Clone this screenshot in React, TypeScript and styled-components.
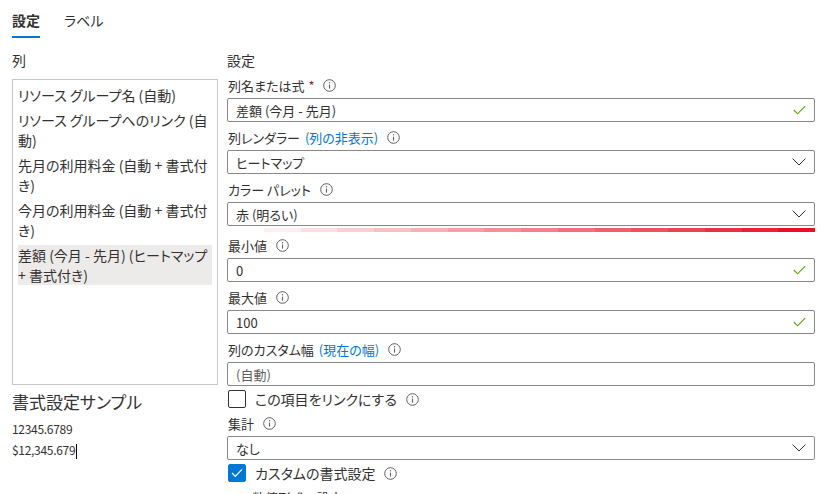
import React from 'react';
import styled, { createGlobalStyle } from 'styled-components';

// Types
interface ColumnItem {
  label: string;
  selected?: boolean;
}

type FieldKind = 'input' | 'select';

interface FieldDef {
  label: string;
  required?: boolean;
  link?: string;
  value: string;
  kind: FieldKind;
  valid?: boolean;
  placeholder?: boolean;
  palette?: boolean;
}

// Data
const columns: ColumnItem[] = [
  { label: 'リソース グループ名 (自動)' },
  { label: 'リソース グループへのリンク (自動)' },
  { label: '先月の利用料金 (自動 + 書式付き)' },
  { label: '今月の利用料金 (自動 + 書式付き)' },
  { label: '差額 (今月 - 先月) (ヒートマップ + 書式付き)', selected: true },
];

const fields: FieldDef[] = [
  { label: '列名または式', required: true, value: '差額 (今月 - 先月)', kind: 'input', valid: true },
  { label: '列レンダラー', link: '(列の非表示)', value: 'ヒートマップ', kind: 'select' },
  { label: 'カラー パレット', value: '赤 (明るい)', kind: 'select', palette: true },
  { label: '最小値', value: '0', kind: 'input', valid: true },
  { label: '最大値', value: '100', kind: 'input', valid: true },
  { label: '列のカスタム幅', link: '(現在の幅)', value: '(自動)', kind: 'input', placeholder: true },
];

const PALETTE_STEPS = 16;

// Styled Components
const GlobalStyle = createGlobalStyle`
  html, body {
    margin: 0;
    padding: 0;
    background: #ffffff;
  }
  body {
    font-family: "Noto Sans CJK JP", "Noto Sans", sans-serif;
    font-feature-settings: "palt";
    color: #323130;
    overflow: hidden;
  }
`;

const Page = styled.div`
  width: 830px;
  height: 494px;
  overflow: hidden;
  padding: 0 15px 0 12px;
  box-sizing: border-box;
`;

const TabBar = styled.div`
  display: flex;
  gap: 24px;
  height: 38px;
`;

const Tab = styled.div<{ active?: boolean }>`
  box-sizing: border-box;
  height: 38px;
  padding-top: 10px;
  font-size: 14px;
  line-height: 20px;
  font-weight: ${({ active }) => (active ? 700 : 400)};
  border-bottom: 2px solid ${({ active }) => (active ? '#0078d4' : 'transparent')};
`;

const Body = styled.div`
  display: flex;
  gap: 9px;
  margin-top: 10px;
`;

const LeftColumn = styled.div`
  width: 206px;
  flex-shrink: 0;
`;

const RightColumn = styled.div`
  flex: 1;
  min-width: 0;
`;

const SectionTitle = styled.div`
  font-size: 14px;
  line-height: 24px;
`;

const ListBox = styled.div`
  box-sizing: border-box;
  height: 306px;
  margin-top: 7px;
  padding: 5px;
  border: 1px solid #c8c6c4;
`;

const ListItem = styled.div<{ selected?: boolean }>`
  font-size: 14px;
  line-height: 20px;
  margin-bottom: 5px;
  background: ${({ selected }) => (selected ? '#edebe9' : 'transparent')};
`;

const SampleTitle = styled.div`
  font-size: 17px;
  line-height: 26px;
  margin-top: 4px;
`;

const SampleList = styled.div`
  margin-top: 3px;
`;

const SampleValue = styled.div`
  font-size: 12px;
  letter-spacing: -0.3px;
  line-height: 21px;
`;

const Caret = styled.span`
  display: inline-block;
  width: 1px;
  height: 15px;
  background: #000000;
  vertical-align: middle;
  margin-left: 1px;
`;

const Field = styled.div<{ tight?: boolean }>`
  margin-bottom: ${({ tight }) => (tight ? '0' : '2px')};
`;

const LabelRow = styled.div<{ indent?: boolean }>`
  display: flex;
  align-items: center;
  height: 26px;
  font-size: 13px;
  padding-left: ${({ indent }) => (indent ? '25px' : '1px')};
`;

const Required = styled.span`
  color: #a4262c;
  margin-left: 4px;
`;

const LinkText = styled.span`
  color: #0078d4;
  margin-left: 5px;
`;

const InfoWrap = styled.span`
  display: inline-flex;
  margin-left: 9px;
`;

const Control = styled.div<{ muted?: boolean }>`
  box-sizing: border-box;
  height: 24px;
  display: flex;
  align-items: center;
  justify-content: space-between;
  padding: 0 8px;
  border: 1px solid #8a8886;
  border-radius: 2px;
  font-size: 13px;
  color: ${({ muted }) => (muted ? '#605e5c' : '#323130')};
`;

const PaletteBar = styled.div`
  display: flex;
  height: 4px;
  margin-top: 2px;
`;

const PaletteCell = styled.div`
  flex: 1;
`;

const CheckRow = styled.div`
  display: flex;
  align-items: center;
  height: 22px;
  padding-left: 1px;
  font-size: 14px;
`;

const CheckBox = styled.span<{ checked?: boolean }>`
  box-sizing: border-box;
  width: 18px;
  height: 18px;
  border-radius: 2px;
  display: inline-flex;
  align-items: center;
  justify-content: center;
  margin-right: 9px;
  border: 1px solid ${({ checked }) => (checked ? '#0078d4' : '#323130')};
  background: ${({ checked }) => (checked ? '#0078d4' : '#ffffff')};
`;

// Icons
const InfoIcon: React.FC = () => (
  <InfoWrap>
    <svg width="13" height="13" viewBox="0 0 13 13">
      <circle cx="6.5" cy="6.5" r="5.8" fill="none" stroke="#605e5c" strokeWidth="1" />
      <line x1="6.5" y1="5.6" x2="6.5" y2="9.6" stroke="#605e5c" strokeWidth="1.1" />
      <circle cx="6.5" cy="3.8" r="0.7" fill="#605e5c" />
    </svg>
  </InfoWrap>
);

const ValidIcon: React.FC = () => (
  <svg width="13" height="10" viewBox="0 0 13 10">
    <path d="M0.8 5 L4.6 8.8 L12.2 1.2" fill="none" stroke="#57a300" strokeWidth="1.1" />
  </svg>
);

const ChevronIcon: React.FC = () => (
  <svg width="14" height="8" viewBox="0 0 14 8">
    <path d="M0.6 0.6 L7 7 L13.4 0.6" fill="none" stroke="#323130" strokeWidth="1" />
  </svg>
);

const TickIcon: React.FC = () => (
  <svg width="12" height="10" viewBox="0 0 12 10">
    <path d="M1 5 L4.3 8.3 L11 1.4" fill="none" stroke="#ffffff" strokeWidth="1.2" />
  </svg>
);

const FieldBlock: React.FC<{ field: FieldDef }> = ({ field }) => (
  <Field tight={field.palette}>
    <LabelRow>
      {field.label}
      {field.required && <Required>*</Required>}
      {field.link && <LinkText>{field.link}</LinkText>}
      <InfoIcon />
    </LabelRow>
    <Control muted={field.placeholder}>
      <span>{field.value}</span>
      {field.kind === 'select' ? <ChevronIcon /> : field.valid ? <ValidIcon /> : null}
    </Control>
    {field.palette && (
      <PaletteBar>
        {Array.from({ length: PALETTE_STEPS }).map((_, i) => (
          <PaletteCell
            key={i}
            style={{ background: `rgba(232, 17, 35, ${i / (PALETTE_STEPS - 1)})` }}
          />
        ))}
      </PaletteBar>
    )}
  </Field>
);

const App: React.FC = () => (
  <>
    <GlobalStyle />
    <Page>
      <TabBar>
        <Tab active>設定</Tab>
        <Tab>ラベル</Tab>
      </TabBar>
      <Body>
        <LeftColumn>
          <SectionTitle>列</SectionTitle>
          <ListBox>
            {columns.map((c) => (
              <ListItem key={c.label} selected={c.selected}>
                {c.label}
              </ListItem>
            ))}
          </ListBox>
          <SampleTitle>書式設定サンプル</SampleTitle>
          <SampleList>
            <SampleValue>12345.6789</SampleValue>
            <SampleValue>
              $12,345.679
              <Caret />
            </SampleValue>
          </SampleList>
        </LeftColumn>
        <RightColumn>
          <SectionTitle>設定</SectionTitle>
          {fields.map((f) => (
            <FieldBlock key={f.label} field={f} />
          ))}
          <CheckRow>
            <CheckBox />
            この項目をリンクにする
            <InfoIcon />
          </CheckRow>
          <Field>
            <LabelRow>
              集計
              <InfoIcon />
            </LabelRow>
            <Control>
              <span>なし</span>
              <ChevronIcon />
            </Control>
          </Field>
          <CheckRow>
            <CheckBox checked>
              <TickIcon />
            </CheckBox>
            カスタムの書式設定
            <InfoIcon />
          </CheckRow>
          <LabelRow indent>数値形式の設定</LabelRow>
        </RightColumn>
      </Body>
    </Page>
  </>
);

export default App;
